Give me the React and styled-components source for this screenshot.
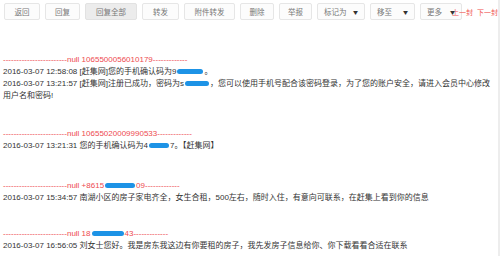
import React from "react";
import styled, { createGlobalStyle } from "styled-components";

const Global = createGlobalStyle`
  html, body { margin: 0; padding: 0; background: #fff; }
  body {
    width: 500px;
    height: 256px;
    overflow: hidden;
    font-family: "Liberation Sans", Arial, "Noto Sans CJK SC", sans-serif;
  }
`;

const Page = styled.div`
  width: 498px;
  height: 256px;
  border-right: 2px solid #ededed;
  overflow: hidden;
`;

const Toolbar = styled.div`
  display: flex;
  align-items: center;
  gap: 5px;
  padding: 3px 0 0 4px;
  height: 17px;
`;

const Btn = styled.div`
  box-sizing: border-box;
  width: ${(p) => p.$w}px;
  height: 17px;
  flex: none;
  display: flex;
  align-items: center;
  justify-content: ${(p) => (p.$drop ? "space-between" : "center")};
  padding: 0 ${(p) => (p.$drop ? "6px" : "0")};
  border: 1px solid ${(p) => (p.$active ? "#e2e2e2" : "#e6e6e6")};
  border-radius: 2px;
  background: ${(p) => (p.$active ? "#ececec" : "#fcfcfc")};
  color: #777;
  font-size: 7.5px;
  font-family: "Noto Sans CJK SC", sans-serif;
`;

const Caret = styled.span`
  font-size: 5px;
  color: #333;
`;

const NavLinks = styled.div`
  display: flex;
  gap: 4px;
  margin-left: -15px;
`;

const NavLink = styled.span`
  color: #f0504c;
  font-size: 7px;
  font-family: "Noto Sans CJK SC", sans-serif;
`;

const Messages = styled.div`
  display: flex;
  flex-direction: column;
  padding: 34px 0 0 3px;
  width: 494px;
`;

const Block = styled.div`
  margin-bottom: ${(p) => p.$after}px;
`;

const Line = styled.div`
  font-size: 8px;
  line-height: 12px;
  color: ${(p) => (p.$red ? "#ee4a4f" : "#333")};
  font-family: "Liberation Sans", Arial, "Noto Sans CJK SC", sans-serif;
  white-space: ${(p) => (p.$red ? "nowrap" : "normal")};
`;

const Blob = styled.span`
  display: inline-block;
  width: ${(p) => p.$w}px;
  height: 5px;
  margin: 0 1px;
  vertical-align: 0px;
  background: #1d93e6;
  border-radius: 3px;
  filter: blur(0.5px);
`;

const dashes = (n) => "-".repeat(n);

export default function App() {
  return (
    <>
      <Global />
      <Page>
        <Toolbar>
          <Btn $w={36}>返回</Btn>
          <Btn $w={35}>回复</Btn>
          <Btn $w={52} $active>回复全部</Btn>
          <Btn $w={37}>转发</Btn>
          <Btn $w={51}>附件转发</Btn>
          <Btn $w={34}>删除</Btn>
          <Btn $w={33}>举报</Btn>
          <Btn $w={48} $drop>标记为<Caret>▼</Caret></Btn>
          <Btn $w={45} $drop>移至<Caret>▼</Caret></Btn>
          <Btn $w={42} $drop>更多<Caret>▼</Caret></Btn>
          <NavLinks>
            <NavLink>上一封</NavLink>
            <NavLink>下一封</NavLink>
          </NavLinks>
        </Toolbar>
        <Messages>
          <Block $after={26}>
            <Line $red>{dashes(24)}null 1065500056010179{dashes(13)}</Line>
            <Line>
              2016-03-07 12:58:08 [赶集网]您的手机确认码为9<Blob $w={26} />。
            </Line>
            <Line>
              2016-03-07 13:21:57 [赶集网]注册已成功，密码为s<Blob $w={24} />，您可以使用手机号配合该密码登录，为了您的账户安全，请进入会员中心修改用户名和密码!
            </Line>
          </Block>
          <Block $after={28}>
            <Line $red>{dashes(24)}null 10655020009990533{dashes(13)}</Line>
            <Line>
              2016-03-07 13:21:31 您的手机确认码为4<Blob $w={20} />7。【赶集网】
            </Line>
          </Block>
          <Block $after={24}>
            <Line $red>
              {dashes(24)}null +8615<Blob $w={30} />09{dashes(13)}
            </Line>
            <Line>
              2016-03-07 15:34:57 南湖小区的房子家电齐全，女生合租，500左右，随时入住，有意向可联系，在赶集上看到你的信息
            </Line>
          </Block>
          <Block $after={0}>
            <Line $red>
              {dashes(24)}null 18<Blob $w={32} />43{dashes(13)}
            </Line>
            <Line>
              2016-03-07 16:56:05 刘女士您好。我是房东我这边有你要租的房子，我先发房子信息给你、你下载看看合适在联系
            </Line>
          </Block>
        </Messages>
      </Page>
    </>
  );
}
